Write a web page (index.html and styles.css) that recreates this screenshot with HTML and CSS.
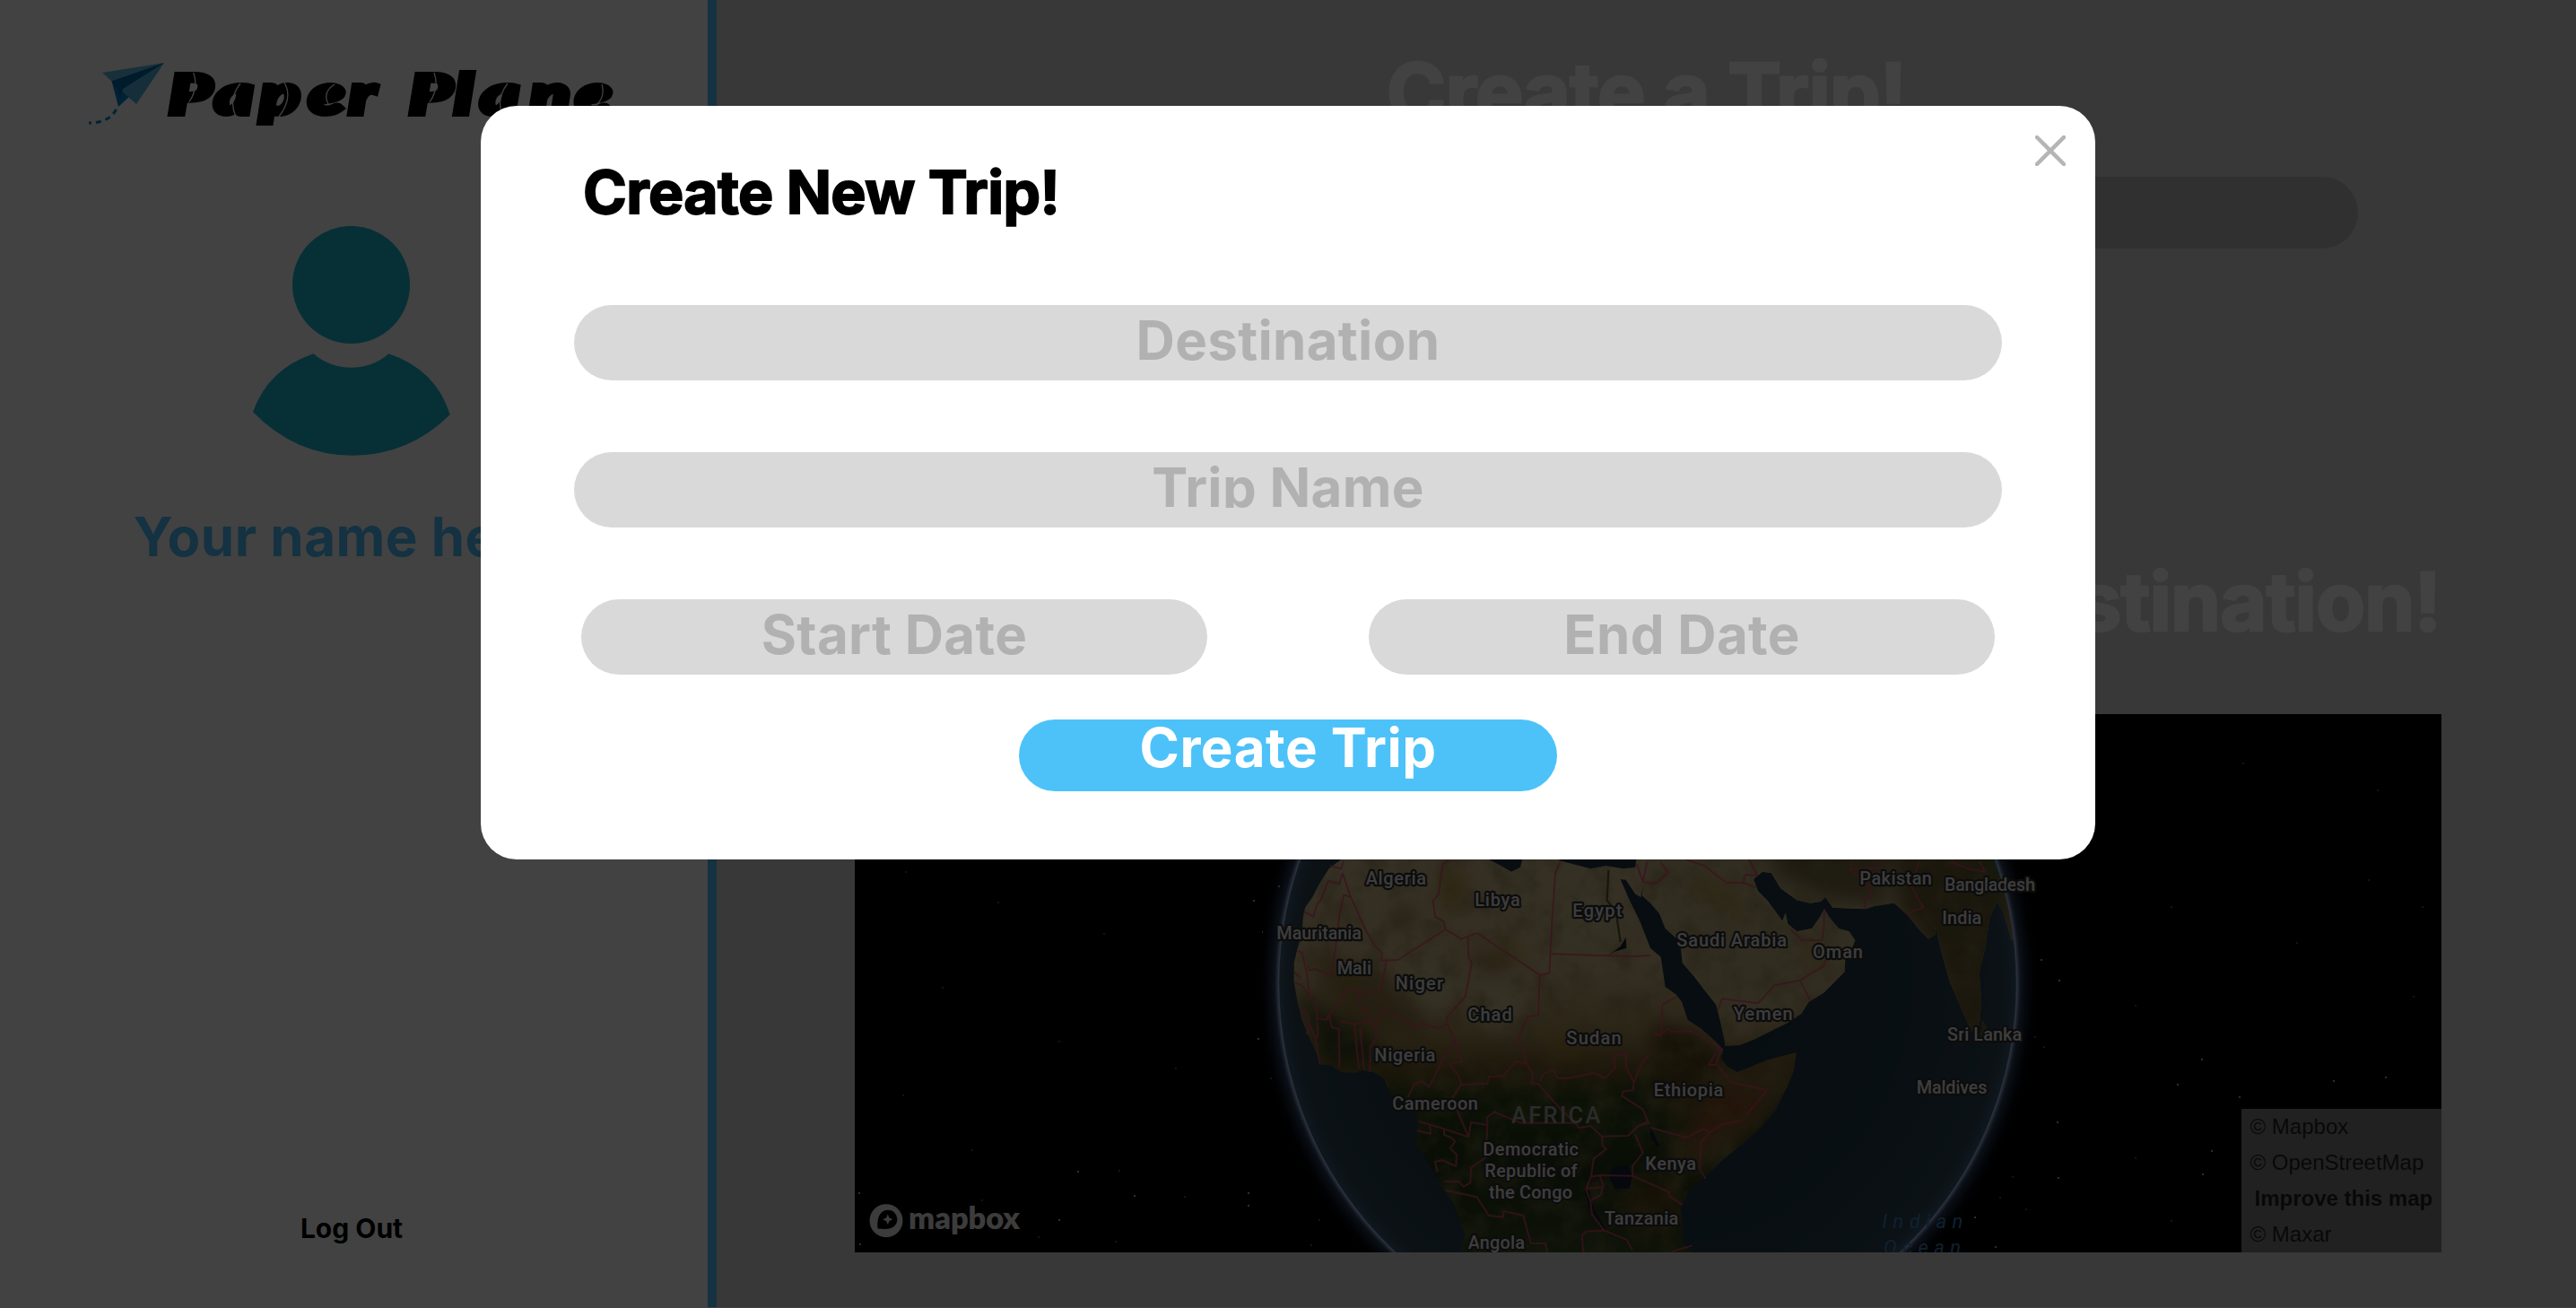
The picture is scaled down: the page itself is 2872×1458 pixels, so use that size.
FILE: index.html
```html
<!DOCTYPE html>
<html lang="en">
<head>
<meta charset="utf-8">
<title>Paper Plane</title>
<link rel="stylesheet" href="styles.css">
</head>
<body>
<div class="app">
  <aside class="sidebar">
    <svg class="logo" viewBox="90 60 620 100" role="img" aria-label="Paper Plane">
      <path fill="#5ab8e0" d="M114 81 183 70 124.500 90.500z"/>
      <path fill="#0084cc" d="M183 70 124.500 90.500 132 119 145 107 135 101z"/>
      <path fill="#4eb0e0" d="M183 70 152 116 135 101z"/>
      <path fill="#0068a8" d="M183 70 124.500 90.500 132 101 134 111 137 99z"/>
      <path fill="none" stroke="#0a86c8" stroke-width="3" stroke-dasharray="6 5" d="M129.500 122C126 129 118 137 99 137"/>
      <text class="logo-text" transform="translate(0 127) scale(1.350 1)" x="139.500 177.500 215 255 288.500 300 338 375.500 397 438 475.500" y="0">Paper Plane</text>
      <g fill="none" stroke="#fff" stroke-width="1.300">
        <path d="M215.700 81q6 17-5 33M268 93q-14 18-5 37M317 92q10 17-6 38M373 94q-14 9-7 22M484 81q6 17-5 33M566 93q-14 18-5 37M671 94q4 14-6 23"/>
      </g>
    </svg>
    <svg class="avatar" viewBox="282 252 220 256" aria-hidden="true">
      <circle cx="391.500" cy="317.400" r="65.500"/>
      <path d="M349.500 394.300q18 15.400 42 15.400t42-15.400q53 18 68.200 68-46 45.500-109 45.500t-110.700-48.500q17-48 67.500-65z"/>
    </svg>
    <p class="user-name">Your name here!</p>
    <a class="logout">Log Out</a>
  </aside>
  <main class="main">
    <h1 class="heading">Create a Trip!</h1>
    <div class="search"></div>
    <h1 class="heading heading-map">Destination!</h1>
    <section class="map">
      <svg class="globe" viewBox="953 796 1769 600">
        <defs>
          <radialGradient id="glow">
            <stop offset=".938" stop-color="#b4d2ff"/>
            <stop offset=".95" stop-color="#5a7bb0" stop-opacity=".5"/>
            <stop offset=".98" stop-color="#2b4470" stop-opacity=".12"/>
            <stop offset="1" stop-color="#2b4470" stop-opacity="0"/>
          </radialGradient>
          <radialGradient id="sea">
            <stop offset="0" stop-color="#1a313e"/>
            <stop offset=".7" stop-color="#223a48"/>
            <stop offset=".96" stop-color="#2c4350"/>
            <stop offset="1" stop-color="#3d5a74"/>
          </radialGradient>
          <linearGradient id="ground" gradientUnits="userSpaceOnUse" x1="0" y1="54" x2="0" y2="1370">
            <stop offset="0" stop-color="#cdb88c"/>
            <stop offset=".28" stop-color="#c8b484"/>
            <stop offset=".44" stop-color="#a8905a"/>
            <stop offset=".53" stop-color="#705a2a"/>
            <stop offset=".61" stop-color="#31441a"/>
            <stop offset=".8" stop-color="#213616"/>
            <stop offset="1" stop-color="#3a4a24"/>
          </linearGradient>
          <filter id="soft" x="-50%" y="-50%" width="200%" height="200%"><feGaussianBlur stdDeviation="32"/></filter>
          <filter id="grain" x="0" y="0" width="100%" height="100%">
            <feTurbulence type="fractalNoise" baseFrequency=".012" numOctaves="5" seed="7"/>
            <feColorMatrix values="0 0 0 0 .25  0 0 0 0 .2  0 0 0 0 .06  0 1.200 0 0 -.5"/>
          </filter>
          <clipPath id="disk"><circle cx="1837" cy="1096" r="411"/></clipPath>
          <clipPath id="land">
            <path d="M345 54 305 85 270 140 250 180 225 215 218 250 215 300 200 350 188 400 187 460 200 530 215 590 235 640 262 700 280 740 310 740 345 765 390 768 415 760 455 765 490 790 510 840 540 860 585 890 605 930 595 1010 620 1040 655 1100 690 1160 720 1200 740 1250 760 1310 745 1370V1400H1500L1520 1368 1490 1340 1488 1290 1480 1215 1515 1160 1560 1120 1620 1060 1690 1005 1750 950 1800 890 1840 810 1860 760 1868 700 1820 712 1770 725 1710 750 1670 765 1635 745 1615 718 1625 690 1595 660 1550 620 1505 590 1485 530 1465 505 1430 480 1415 380 1380 350 1345 260 1310 190 1280 120 1298 122 1330 170 1348 180 1356 135 1370 54V-20H1340L1330 80 1290 85 1230 75 1180 85 1085 60 1040 40H955L945 80 915 95 880 75 840 54 700 20H400z"/>
            <path d="M1356 135 1352 175 1380 200 1410 235 1430 285 1480 330 1487 400 1530 450 1560 490 1600 540 1615 600 1628 660 1630 678 1680 675 1730 655 1790 625 1840 600 1885 570 1910 530 1960 500 2010 450 2030 430 2032 390 2055 350 2065 325 2045 295 2010 285 1980 250 1962 220 1945 250 1920 285 1870 295 1840 270 1832 232 1822 260 1800 230 1770 190 1740 160 1725 120 1755 95 1785 100 1815 150 1870 190 1915 200 1950 195 1965 180 1990 215 2100 220 2130 210 2195 200 2240 240 2280 290 2310 320 2333 305 2333 275 2355 370 2380 460 2410 530 2440 600 2460 635 2480 610 2485 560 2485 500 2480 430 2500 350 2515 250 2540 195 2560 230 2588 325 2594 320 2575 200 2550 120 2520 40V-20H1370z"/>
            <path d="M2490 590 2505 615 2505 650 2495 665 2485 640z"/>
          </clipPath>
        </defs>
        <g fill="#fff">
          <path opacity=".7" d="M1425 987h2v2h-2zM957 1329h2v2h-2zM1180 1359h2v2h-2zM1264 1332h2v2h-2zM1201 1305h2v2h-2zM1397 1003h2v2h-2zM1391 1329h2v2h-2zM1391 1343h2v2h-2zM958 1386h2v2h-2zM1407 1038h1v2h-1zM1402 1157h2v2h-2zM2275 1069h2v2h-2zM2295 1092h2v2h-2zM2293 1250h2v2h-2zM2294 1312h2v2h-2zM2201 1356h2v2h-2zM2224 1389h2v2h-2zM2427 1208h2v2h-2zM2455 1308h2v2h-2zM2465 1282h2v2h-2zM2496 1222h2v2h-2zM2659 1200h2v2h-2zM2601 1204h2v2h-2zM2454 1180h2v2h-2z"/>
          <path opacity=".3" d="M1009 971h2v2h-2zM1112 1005h2v2h-2zM1083 1281h2v2h-2zM1247 1304h2v2h-2zM1320 1333h2v2h-2zM1243 1383h2v2h-2zM1157 1378h2v2h-2zM1416 1201h2v2h-2zM1450 1246h2v2h-2zM1470 1359h2v2h-2zM1461 1387h2v2h-2zM1050 1100h2v2h-2zM1180 1160h2v2h-2zM1230 1040h2v2h-2zM1310 1190h2v2h-2zM1006 1220h2v2h-2zM1094 1337h2v2h-2zM2243 1311h2v2h-2zM2229 1334h2v2h-2zM2258 1347h2v2h-2zM2278 1166h2v2h-2zM2268 1155h2v2h-2zM2420 1010h2v2h-2zM2380 1120h2v2h-2zM2560 1050h2v2h-2zM2640 980h2v2h-2zM2690 1110h2v2h-2zM2380 1290h2v2h-2zM2420 1360h2v2h-2zM2500 850h2v2h-2zM2650 880h2v2h-2zM2700 1010h2v2h-2z"/>
        </g>
        <circle cx="1837" cy="1096" r="438" fill="url(#glow)"/>
        <circle cx="1837" cy="1096" r="411" fill="url(#sea)"/>
        <g clip-path="url(#disk)">
          <g transform="translate(1380 940) scale(.333333)">
            <g clip-path="url(#land)">
              <path fill="url(#ground)" d="M0-20H2700V1400H0z"/>
              <g filter="url(#soft)">
                <path fill="#c0ae80" d="M1340 0H2150L2070 350 1900 560 1640 660 1480 380z"/>
                <path fill="#77693f" d="M1760-20H2200L2150 210 1960 190 1800 110z"/>
                <path fill="#665830" d="M2200-20H2600V700H2400L2340 400 2200 200z"/>
                <path fill="#4c5a2c" d="M2430-20H2580V230L2500 150z"/>
                <path fill="#57471f" d="M1380 600 1560 640 1640 780 1560 900 1400 900z"/>
                <path fill="#7a6438" d="M1600 760 1870 700 1830 860 1700 990 1540 1110 1430 1050z"/>
                <path fill="#8a4c20" d="M1640 810 1770 830 1720 920 1620 960 1500 1020 1500 960z"/>
                <path fill="#2a421c" d="M1290 820 1410 800 1400 940 1300 980z"/>
                <path fill="#57441f" d="M1280 1120H1480V1250L1400 1330 1280 1250z"/>
                <path fill="#37451e" d="M190 480 300 560 440 620 500 740 280 740z"/>
                <path fill="#927a42" d="M230 360 440 420 640 540 640 680 480 650 330 560z"/>
                <path fill="#cfc092" d="M520 440 700 400 740 520 640 580zM780 440 960 480 940 600 800 610zM1080 120 1260 200 1200 330 1090 330z"/>
                <path fill="#a9872f" d="M690 70 770 130 690 260zM860 300 960 380 900 400zM1050 640 1180 680 1050 720z"/>
                <path fill="#8b6a35" d="M790 340 890 400 860 450 800 400zM520 200 600 240 560 300zM330 220 400 280 340 280z"/>
                <path fill="#ac9a40" d="M1480 110 1600 120 1740 260 1700 270 1580 190zM1900 310 1960 330 1960 440 1900 400z"/>
              </g>
              <path filter="url(#grain)" d="M0-20H2700V1400H0z"/>
              <path fill="#14212f" d="M1250 1085 1300 1075 1320 1110 1310 1155 1260 1155 1243 1120zM1160 1160 1172 1210 1210 1285 1230 1290 1190 1220 1175 1160zM1232 380 1280 345 1298 315 1300 350 1260 362zM1380 950 1410 1010 1400 1015 1380 980z"/>
              <path fill="none" stroke="#5a5a30" stroke-width="7" d="M1240 90 1235 190 1265 230 1280 330"/>
            </g>
            <g class="borders">
              <path d="M310 75 345 85 355 60M350 100 378 180 355 172 340 240 315 445 260 420 240 425 235 405M350 100 340 135 303 125 280 185 265 205 253 245 220 228M378 180 430 295 460 345 483 365 480 392M480 392 535 390 695 288 690 262 660 245 653 192 672 170 685 70 705 58M695 288 748 320 800 300 1010 440 1042 435 1050 280 1062 100 1080 58M1050 370 1240 376 1325 378 1380 375M498 392 478 496 405 498 390 488 355 500 330 545 305 575 300 590M405 498 410 545 440 580 450 595M770 315 772 380 783 400 760 515 700 580 698 605 670 620 620 602 590 610 495 560 475 565 463 600 462 655 443 680 442 765"/>
              <path d="M1010 440 1005 575 970 580 935 662 955 690 965 735 988 772 980 800 1005 805 1085 895 1130 935 1140 952 1180 945 1218 980 1305 978 1340 945 1380 935M700 605 725 650 722 675 700 695 640 815 615 795 590 805 568 850M725 650 735 690 750 730 708 738 740 780 747 807 718 850 735 895 772 982 690 955 605 930M747 807 835 803 840 780 888 778 930 730 965 735M1010 795 1025 770 1055 757 1070 785 1110 785 1190 768 1230 785 1262 750 1258 710 1298 705 1300 750 1325 800 1322 825 1288 830 1285 845 1355 890 1372 930 1340 945M1325 800 1350 735 1380 705M772 982 780 933 835 942 835 915 858 898 945 935 1130 935M835 942 830 1050 780 1085 778 1135 755 1148 740 1132 690 1130M600 960 645 972 643 945M690 955 690 975 715 985 727 997 710 1020 732 1040 730 1080 685 1060 660 1065 668 1100"/>
              <path d="M695 1160 800 1183 840 1245 887 1250 890 1230 955 1245 980 1337 1030 1338 1035 1368M1218 980 1220 1010 1233 1022 1190 1055 1182 1115 1165 1155 1180 1200 1185 1240 1225 1295 1300 1325 1320 1360M1182 1115 1210 1110 1320 1112 1320 1080 1355 1035 1330 975M1320 1112 1440 1165 1445 1180 1488 1210M1210 1110 1222 1140 1215 1175 1180 1195M1165 1155 1215 1150M1155 1368 1152 1310 1165 1298 1225 1295M200 360 215 365 230 430 235 470 240 510 258 515 265 580 268 640 260 655 275 740M188 430 210 450M187 465 215 475 240 510M210 570 225 560 235 580 240 605 230 640M240 605 258 650M268 585 295 590 305 575 315 615 338 620 340 750M340 595 395 605 450 590M390 605 405 755M410 615 422 755M440 600 462 610M1450 1366 1520 1345"/>
              <path d="M1385 640 1400 640 1415 645 1420 540 1465 515M1395 630 1410 640 1445 620 1450 630 1520 628 1620 690M1615 688 1600 740 1575 742 1600 700M1605 742 1650 800 1770 825 1700 910M1680 928 1620 940 1580 965 1555 955 1500 985 1380 950M1580 965 1550 1000 1545 1090 1565 1122M1605 560 1620 520 1740 535 1795 475 1880 458 1960 410 1965 390M1880 458 1915 525M1850 288 1885 323 1955 325 1960 285 1962 220M1500 55 1560 75 1635 132 1690 132 1735 148M1690 132 1698 105 1738 108 1710 55M1415 65 1440 97 1405 130 1380 135M2160 55 2155 80 2048 88 2055 60M2048 88 2100 130 2122 175 2098 185 2098 220M2280 60 2250 140 2293 215 2250 230 2245 245M2385 60 2440 85 2500 95 2480 60M1335 70 1355 130 1370 60M1360 130 1380 132"/>
            </g>
          </g>
        </g>
        <circle cx="1837" cy="1096" r="411.500" fill="none" stroke="#9ab4d2" stroke-opacity=".5" stroke-width="2"/>
        <g class="labels" transform="translate(1380 940) scale(.333333)">
          <text x="428" y="137" textLength="202">Algeria</text>
          <text x="793" y="209" textLength="151">Libya</text>
          <text x="1120" y="245" textLength="165">Egypt</text>
          <text x="130" y="320" textLength="284">Mauritania</text>
          <text x="332" y="439" textLength="115">Mali</text>
          <text x="527" y="490" textLength="160">Niger</text>
          <text x="769" y="595" textLength="148">Chad</text>
          <text x="1099" y="672" textLength="184">Sudan</text>
          <text x="457" y="728" textLength="204">Nigeria</text>
          <text x="517" y="892" textLength="287">Cameroon</text>
          <text x="820" y="1044" textLength="320">Democratic</text>
          <text x="826" y="1117" textLength="310">Republic of</text>
          <text x="840" y="1189" textLength="279">the Congo</text>
          <text x="1363" y="1093" textLength="170">Kenya</text>
          <text x="1226" y="1274" textLength="248">Tanzania</text>
          <text x="770" y="1355" textLength="190">Angola</text>
          <text x="1391" y="845" textLength="233">Ethiopia</text>
          <text x="1468" y="346" textLength="368">Saudi Arabia</text>
          <text x="1923" y="383" textLength="168">Oman</text>
          <text x="1658" y="590" textLength="198">Yemen</text>
          <text x="2080" y="138" textLength="242">Pakistan</text>
          <text x="2364" y="159" textLength="303">Bangladesh</text>
          <text x="2356" y="269" textLength="132">India</text>
          <text x="2373" y="659" textLength="250">Sri Lanka</text>
          <text x="2270" y="837" textLength="237">Maldives</text>
          <text class="continent" x="915" y="935" textLength="298">AFRICA</text>
          <text class="ocean" x="2155" y="1286" textLength="270">Indian</text>
          <text class="ocean" x="2160" y="1374" textLength="258">Ocean</text>
        </g>
        <circle cx="988" cy="1360.700" r="18.500" fill="#e8e8e8"/>
        <path d="M978.500 1369.500c-.5-9 .5-14 4-17.500a10.500 10.500 0 0 1 15 0 10.500 10.500 0 0 1 0 14.500c-4 3.500-10 4-19 3z"/>
        <path fill="#e8e8e8" d="m989.800 1353.500 1.700 4 4 1.700-4 1.700-1.700 4-1.700-4-4-1.700 4-1.700z"/>
        <text class="brand" x="1013" y="1370" textLength="124" lengthAdjust="spacingAndGlyphs">mapbox</text>
      </svg>
      <div class="attribution">
        <span>© Mapbox</span>
        <span>© OpenStreetMap</span>
        <span class="improve">Improve this map</span>
        <span>© Maxar</span>
      </div>
    </section>
  </main>
</div>
<div class="overlay">
  <form class="modal">
    <header class="modal-head">
      <h2 class="modal-title">Create New Trip!</h2>
      <svg class="close" viewBox="0 0 34 34" aria-label="Close"><path d="M2 2 32 32M32 2 2 32"/></svg>
    </header>
    <div class="field">Destination</div>
    <div class="field"><span class="field-clip">Trip Name</span></div>
    <div class="dates">
      <div class="field">Start Date</div>
      <div class="field">End Date</div>
    </div>
    <div class="submit">Create Trip</div>
  </form>
</div>
</body>
</html>
```
FILE: styles.css
```css
* { box-sizing: border-box; }
body {
  margin: 0;
  background: #fff;
  font-family: Inter, "Liberation Sans", sans-serif;
  overflow: hidden;
}
h1, h2, p { margin: 0; }
.app { display: flex; height: 1457px; }
.sidebar {
  width: 799px;
  border-right: 10px solid #4dc2f9;
  background: #fff;
  display: flex;
  flex-direction: column;
  align-items: center;
  padding: 60px 5px 0 0;
}
.logo { width: 620px; height: 100px; margin-left: 16px; flex: none; }
.logo-text {
  font: italic 900 60px Lato, sans-serif;
  stroke: #000;
  stroke-width: 6px;
}
.avatar { width: 220px; height: 256px; margin-top: 92px; flex: none; fill: #1bb6d0; }
.user-name {
  margin-top: 53px;
  font-size: 60px;
  line-height: 74px;
  font-weight: 700;
  letter-spacing: .5px;
  color: #4dc2f9;
  white-space: nowrap;
}
.logout { margin-top: 716px; font-size: 30px; line-height: 36px; font-weight: 650; color: #000; }
.main {
  flex: 1;
  background: #d9d9d9;
  display: flex;
  flex-direction: column;
  align-items: center;
}
.heading {
  margin-top: 48px;
  font-size: 90px;
  line-height: 110px;
  font-weight: 700;
  letter-spacing: -.9px;
  -webkit-text-stroke: 2.5px #fff;
  color: #fff;
  white-space: nowrap;
}
.search { width: 1586px; height: 80px; margin-top: 39px; border-radius: 40px; background: #bababa; }
.heading-map { width: 1771px; margin-top: 339px; text-align: right; }
.map { position: relative; width: 1769px; height: 600px; margin-top: 70px; margin-left: 3px; background: #000; }
.globe { display: block; width: 1769px; height: 600px; }
.borders { fill: none; stroke: #e0486f; stroke-opacity: .75; stroke-width: 6px; stroke-linejoin: round; }
.labels {
  font: 500 60px Roboto, sans-serif;
  fill: #ececec;
  stroke: #30302e;
  stroke-width: 13px;
  stroke-linejoin: round;
  paint-order: stroke;
}
.continent { font-size: 76px; fill: #a2a2a2; stroke: none; }
.ocean { font-size: 66px; font-weight: 400; font-style: italic; fill: #3a80bc; stroke: none; }
.brand { font: 800 34px Lato, sans-serif; fill: #e8e8e8; }
.attribution {
  position: absolute;
  right: 0;
  bottom: 0;
  width: 223px;
  height: 160px;
  padding-left: 10px;
  background: rgba(255, 255, 255, .5);
  display: flex;
  flex-direction: column;
  font: 24px/40px "Liberation Sans", Arial, sans-serif;
  color: rgba(0, 0, 0, .75);
  white-space: nowrap;
}
.improve { padding-left: 5px; font-weight: 700; }
.overlay {
  position: fixed;
  inset: 0;
  display: flex;
  justify-content: center;
  align-items: flex-start;
  padding-top: 118px;
  background: rgba(0, 0, 0, .742);
}
.modal {
  width: 1800px;
  height: 840px;
  border-radius: 40px;
  background: #fff;
  display: flex;
  flex-direction: column;
  align-items: center;
}
.modal-head {
  width: 100%;
  height: 222px;
  padding: 33px 33px 0 114px;
  display: flex;
  justify-content: space-between;
  align-items: flex-start;
}
.modal-title {
  margin-top: 23px;
  font-size: 66px;
  line-height: 80px;
  font-weight: 700;
  letter-spacing: -.6px;
  -webkit-text-stroke: 1.8px #000;
  color: #000;
  white-space: nowrap;
}
.close { width: 34px; height: 34px; fill: none; stroke: #b5b5b5; stroke-width: 4.5px; stroke-linecap: round; }
.field {
  width: 1592px;
  height: 84px;
  margin-bottom: 80px;
  border-radius: 42px;
  background: #d9d9d9;
  color: #b1b1b1;
  font-size: 60px;
  line-height: 78px;
  font-weight: 700;
  letter-spacing: .3px;
  text-align: center;
}
.field-clip { display: block; height: 62px; overflow: hidden; }
.dates { display: flex; gap: 180px; }
.dates .field { width: 698px; margin-bottom: 50px; }
.submit {
  width: 600px;
  height: 80px;
  border-radius: 40px;
  background: #4dc2f9;
  color: #fff;
  font-size: 60px;
  line-height: 62px;
  font-weight: 750;
  letter-spacing: .5px;
  text-align: center;
}
```
